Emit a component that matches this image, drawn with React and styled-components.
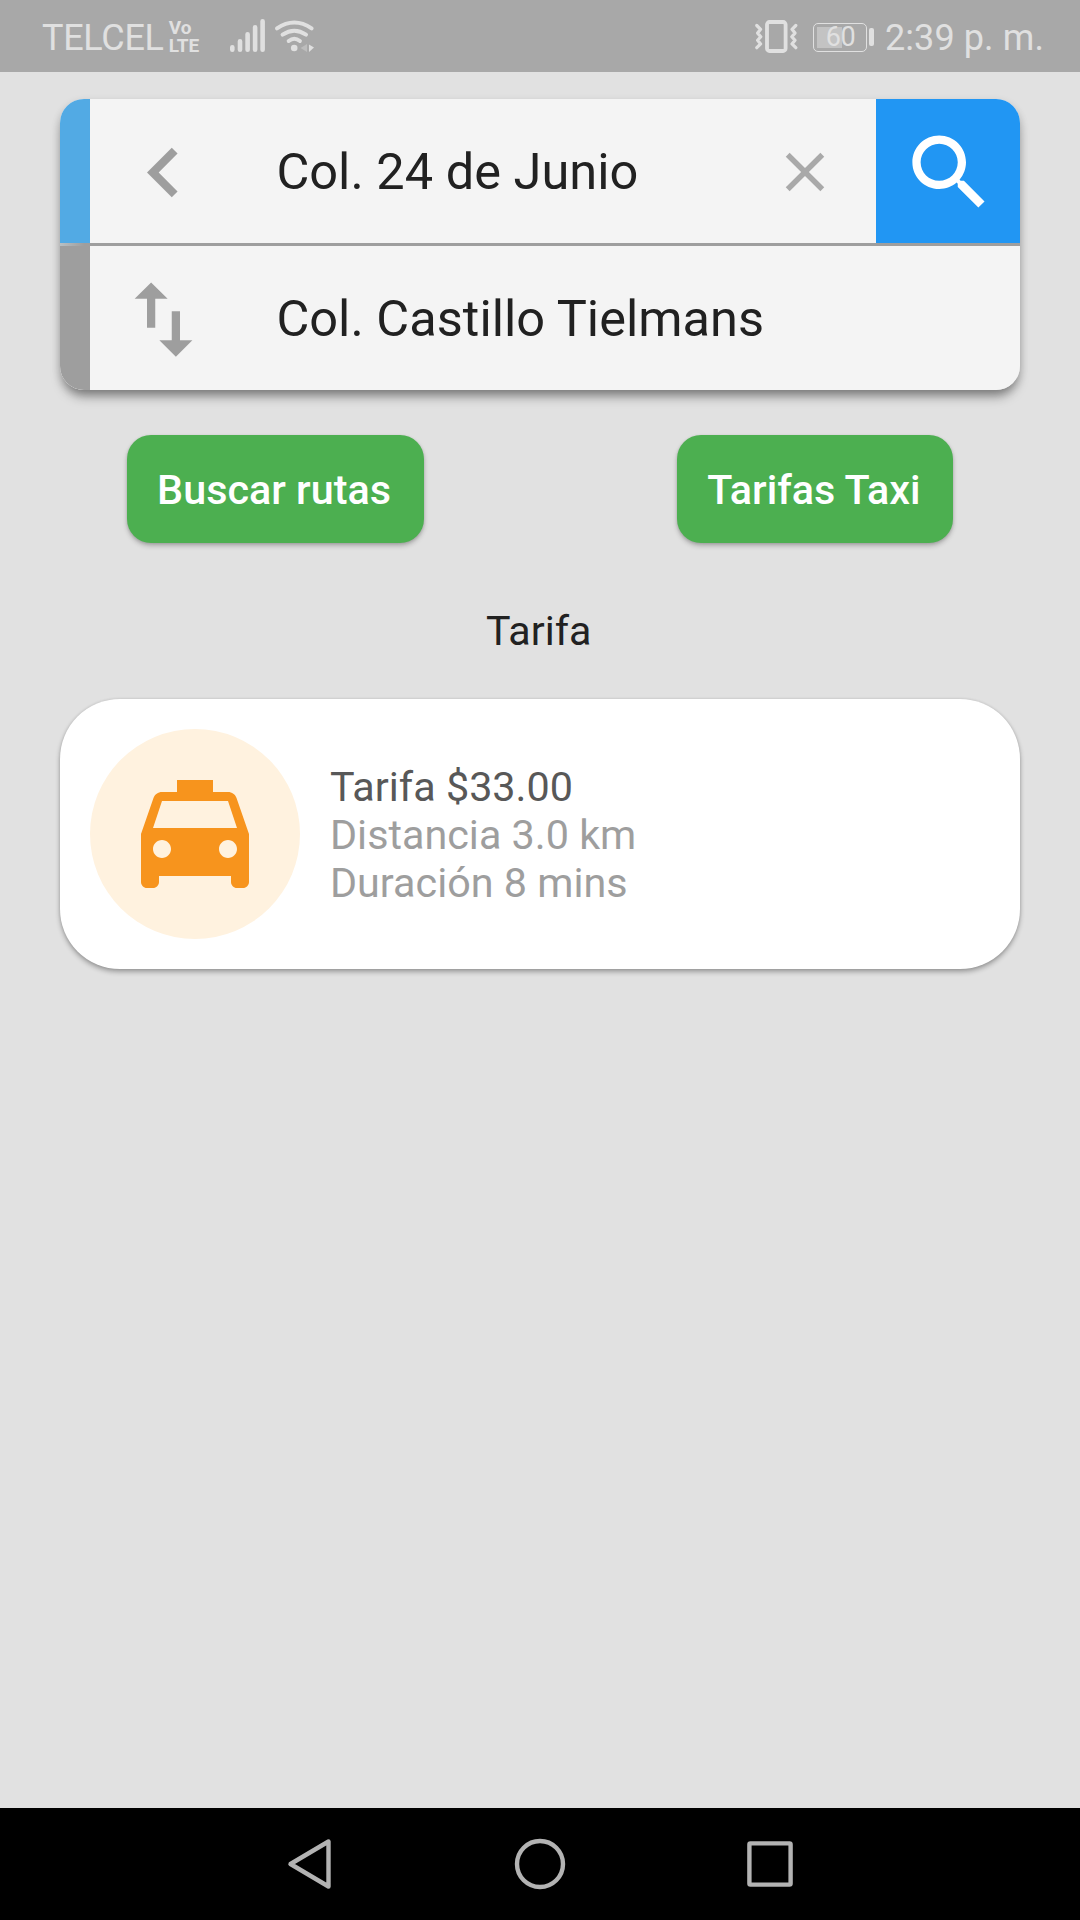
import React from "react";
import styled, { createGlobalStyle } from "styled-components";

const GlobalStyle = createGlobalStyle`
  * { box-sizing: border-box; }
  body { margin: 0; background: #e1e1e1; }
  button { border: 0; padding: 0; margin: 0; background: none; font-family: inherit; }
  svg { display: block; flex: none; }
`;

const Screen = styled.div`
  display: flex;
  flex-direction: column;
  width: 1080px;
  height: 1920px;
  overflow: hidden;
  background: #e1e1e1;
  font-family: Roboto, "Liberation Sans", sans-serif;
  color: #212121;
`;

const StatusBar = styled.header`
  display: flex;
  flex: none;
  justify-content: space-between;
  height: 72px;
  padding: 0 36px 0 42px;
  background: #a8a8a8;
  color: #e0e0e0;
`;

const StatusGroup = styled.div`
  display: flex;
  align-items: center;
  height: 72px;
`;

const StatusText = styled.span`
  padding-top: 4px;
  font-size: 36px;
  line-height: 42px;
  letter-spacing: ${(p) => p.$spacing || 0}px;
  white-space: pre;
`;

const Volte = styled.span`
  width: 33px;
  margin: 2px 27px 0 5px;
  font-size: 19px;
  font-weight: 700;
  line-height: 18px;
  white-space: pre-line;
`;

const Battery = styled.div`
  display: flex;
  align-items: center;
  margin: 2px 11px 0 15px;
`;

const BatteryBody = styled.div`
  display: flex;
  align-items: center;
  justify-content: center;
  width: 54px;
  height: 29px;
  border: 1.5px solid #e0e0e0;
  border-radius: 5px;
  background: linear-gradient(90deg, #c3c3c3 0 25px, transparent 25px) 3px 3px / 46px 21px no-repeat;
  font-size: 27px;
  line-height: 28px;
  letter-spacing: -0.4px;
`;

const BatteryTip = styled.div`
  width: 4.5px;
  height: 18px;
  margin-left: 2px;
  border-radius: 2px;
  background: #e0e0e0;
`;

const Content = styled.main`
  display: flex;
  flex: 1;
  flex-direction: column;
  padding-top: 27px;
`;

const RouteCard = styled.section`
  display: flex;
  flex: none;
  flex-direction: column;
  margin: 0 60px;
  border-radius: 24px;
  box-shadow: 0 9px 12px -3px rgba(0, 0, 0, 0.4), 0 3px 9px rgba(0, 0, 0, 0.14);
  overflow: hidden;
`;

const RouteRow = styled.div`
  display: flex;
  align-items: center;
  height: 144px;
  border-left: 30px solid ${(p) => p.$accent};
  background: #f4f4f4;
`;

const RouteDivider = styled.div`
  height: 3px;
  background: linear-gradient(90deg, #b8c0c4, #9e9e9e 24px);
`;

const IconButton = styled.button`
  display: flex;
  align-items: center;
  justify-content: center;
  width: ${(p) => p.$size}px;
  height: 144px;
  margin: 0 ${(p) => p.$right}px 0 ${(p) => p.$left || 0}px;
  padding-top: 2px;
  color: ${(p) => p.$color || "#9e9e9e"};
`;

const PlaceName = styled.span`
  flex: 1;
  padding-top: 1px;
  font-size: 50.5px;
  line-height: 60px;
  letter-spacing: 0.03px;
  white-space: nowrap;
`;

const SearchButton = styled.button`
  display: flex;
  align-items: center;
  justify-content: center;
  width: 144px;
  height: 144px;
  padding: 2px 0 0 3px;
  background: #2196f3;
  color: #fff;
`;

const Actions = styled.div`
  display: flex;
  flex: none;
  justify-content: space-around;
  margin-top: 45px;
`;

const ActionButton = styled.button`
  width: ${(p) => p.$width}px;
  height: 108px;
  padding: 2px 2.5px 0 0;
  border-radius: 24px;
  background: #4caf50;
  box-shadow: 0 3px 5px rgba(0, 0, 0, 0.22), 0 1px 3px rgba(0, 0, 0, 0.12);
  color: #fff;
  font-size: 41.3px;
  font-weight: 500;
  line-height: 48px;
  white-space: nowrap;
`;

const Heading = styled.h1`
  margin: 64px 0 44px;
  padding-right: 2.5px;
  font-size: 41.2px;
  font-weight: 400;
  line-height: 48px;
  text-align: center;
`;

const FareCard = styled.section`
  display: flex;
  align-items: center;
  flex: none;
  gap: 30px;
  height: 270px;
  margin: 0 60px;
  padding: 0 30px;
  border-radius: 60px;
  background: #fff;
  box-shadow: 0 3px 5px rgba(0, 0, 0, 0.3), 0 0 3px rgba(0, 0, 0, 0.12);
`;

const Avatar = styled.div`
  display: flex;
  align-items: center;
  justify-content: center;
  width: 210px;
  height: 210px;
  border-radius: 50%;
  background: #fff2df;
  color: #f7941d;
`;

const FareDetails = styled.div`
  display: flex;
  flex-direction: column;
  padding-top: 2px;
`;

const FareLine = styled.span`
  color: ${(p) => (p.$strong ? "#585858" : "#9e9e9e")};
  font-size: 41.3px;
  line-height: 48px;
`;

const NavBar = styled.nav`
  display: flex;
  flex: none;
  align-items: center;
  justify-content: center;
  gap: 173.5px;
  height: 112px;
  background: #000;
  color: #b3b3b3;
`;

const MaterialIcon = ({ size, d }) => (
  <svg width={size} height={size} viewBox="0 0 24 24" fill="currentColor">
    <path d={d} />
  </svg>
);

const icons = {
  back: "M15.41 7.41 14 6l-6 6 6 6 1.41-1.41L10.83 12z",
  swap: "M16 17.01V10h-2v7.01h-3L15 21l4-3.99h-3zM9 3 5 6.99h3V14h2V6.99h3L9 3z",
  close:
    "M19 6.41 17.59 5 12 10.59 6.41 5 5 6.41 10.59 12 5 17.59 6.41 19 12 13.41 17.59 19 19 17.59 13.41 12z",
  search:
    "M15.5 14h-.79l-.28-.27C15.41 12.59 16 11.11 16 9.5 16 5.91 13.09 3 9.5 3S3 5.91 3 9.5 5.91 16 9.5 16c1.61 0 3.09-.59 4.23-1.57l.27.28v.79l5 4.99L20.49 19l-4.99-5zm-6 0C7.01 14 5 11.99 5 9.5S7.01 5 9.5 5 14 7.01 14 9.5 11.99 14 9.5 14z",
  taxi:
    "M18.92 6.01C18.72 5.42 18.16 5 17.5 5H15V3H9v2H6.5c-.66 0-1.21.42-1.42 1.01L3 12v8c0 .55.45 1 1 1h1c.55 0 1-.45 1-1v-1h12v1c0 .55.45 1 1 1h1c.55 0 1-.45 1-1v-8l-2.08-5.99zM6.5 16c-.83 0-1.5-.67-1.5-1.5S5.67 13 6.5 13s1.5.67 1.5 1.5S7.33 16 6.5 16zm11 0c-.83 0-1.5-.67-1.5-1.5s.67-1.5 1.5-1.5 1.5.67 1.5 1.5-.67 1.5-1.5 1.5zM5 11l1.5-4.5h11L19 11H5z",
};

const Signal = () => (
  <svg width="90" height="72" viewBox="229 0 90 72" fill="none" stroke="#e0e0e0" strokeWidth="4.6" strokeLinecap="round">
    <path d="M232.3 47.3v2.4M240 41.3v8.4M247.6 34.3v15.4M255.1 27.3v22.4M262.6 21.3v28.4" />
    <path strokeWidth="4" d="M277 28.3q17.3-11.6 34.6 0M282.6 34.7q11.7-7.8 23.4 0M288.7 41q5.6-4.4 11.2 0" />
    <circle cx="294.2" cy="48" r="3.3" fill="#e0e0e0" stroke="none" />
    <path d="M307 44v8l-6.5-4z" fill="#bdbdbd" stroke="none" />
    <path d="M309 44.5v7.5l5-4.6z" fill="#e0e0e0" stroke="none" />
  </svg>
);

const Vibrate = () => (
  <svg width="44" height="72" viewBox="755 0 44 72" fill="none" stroke="#e0e0e0">
    <rect x="768" y="22" width="18.6" height="29" rx="2.5" strokeWidth="3.8" />
    <path
      strokeWidth="3.2"
      strokeLinecap="round"
      strokeLinejoin="round"
      d="M757.8 25.5l3.8 3.8-3 3.8 3.2 3.6-3.2 3.6 3 3.6-3.8 3.8M796.8 25.5l-3.8 3.8 3 3.8-3.2 3.6 3.2 3.6-3 3.6 3.8 3.8"
    />
  </svg>
);

const NavIcon = ({ width, children }) => (
  <svg width={width} height="56" viewBox={`0 0 ${width} 56`} fill="none" stroke="currentColor" strokeWidth="4.4" strokeLinejoin="round">
    {children}
  </svg>
);

export default function App() {
  return (
    <>
      <GlobalStyle />
      <Screen>
        <StatusBar>
          <StatusGroup>
            <StatusText $spacing={-0.3}>TELCEL</StatusText>
            <Volte>{"Vo\nLTE"}</Volte>
            <Signal />
          </StatusGroup>
          <StatusGroup>
            <Vibrate />
            <Battery>
              <BatteryBody>60</BatteryBody>
              <BatteryTip />
            </Battery>
            <StatusText $spacing={0.1}>2:39 p. m.</StatusText>
          </StatusGroup>
        </StatusBar>

        <Content>
          <RouteCard>
            <RouteRow $accent="#52aae4">
              <IconButton $size={99} $left={24} $right={63.4} aria-label="Volver">
                <MaterialIcon size={99} d={icons.back} />
              </IconButton>
              <PlaceName>Col. 24 de Junio</PlaceName>
              <IconButton $size={66} $right={38} $color="#a9a9a9" aria-label="Borrar">
                <MaterialIcon size={66} d={icons.close} />
              </IconButton>
              <SearchButton aria-label="Buscar">
                <MaterialIcon size={99} d={icons.search} />
              </SearchButton>
            </RouteRow>
            <RouteDivider />
            <RouteRow $accent="#9e9e9e">
              <IconButton $size={99} $left={24} $right={63.4} aria-label="Intercambiar">
                <MaterialIcon size={99} d={icons.swap} />
              </IconButton>
              <PlaceName>Col. Castillo Tielmans</PlaceName>
            </RouteRow>
          </RouteCard>

          <Actions>
            <ActionButton $width={297}>Buscar rutas</ActionButton>
            <ActionButton $width={276}>Tarifas Taxi</ActionButton>
          </Actions>

          <Heading>Tarifa</Heading>

          <FareCard>
            <Avatar>
              <MaterialIcon size={144} d={icons.taxi} />
            </Avatar>
            <FareDetails>
              <FareLine $strong>Tarifa $33.00</FareLine>
              <FareLine>Distancia 3.0 km</FareLine>
              <FareLine>Duración 8 mins</FareLine>
            </FareDetails>
          </FareCard>
        </Content>

        <NavBar>
          <NavIcon width={56}>
            <path d="M45.5 5.5v45L7.5 28z" />
          </NavIcon>
          <NavIcon width={56}>
            <circle cx="28" cy="28" r="23" />
          </NavIcon>
          <NavIcon width={56}>
            <rect x="7.4" y="7.4" width="41.2" height="41.2" rx="1" />
          </NavIcon>
        </NavBar>
      </Screen>
    </>
  );
}
